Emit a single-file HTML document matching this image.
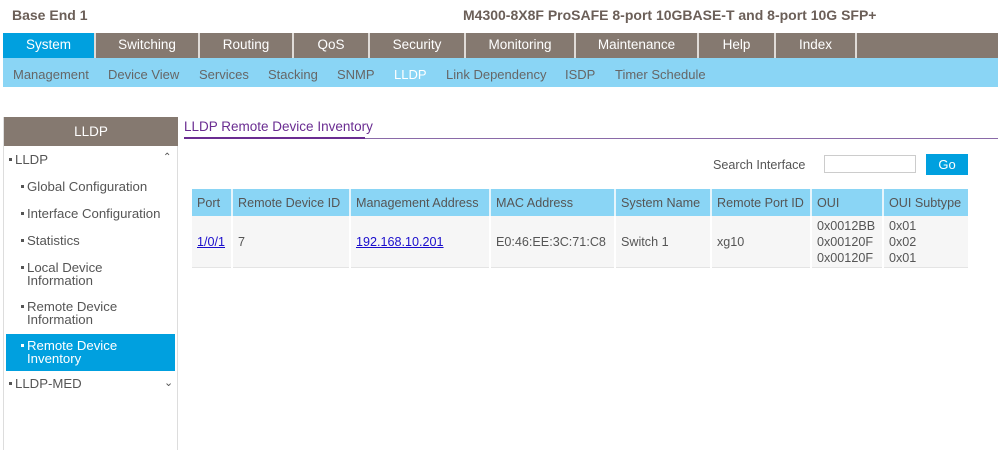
<!DOCTYPE html>
<html><head><style>
body{margin:0;width:998px;height:450px;background:#fff;font-family:"Liberation Sans",Arial,sans-serif;font-size:13px;color:#555;position:relative;overflow:hidden}
.a{position:absolute;white-space:nowrap}
.tab{position:absolute;top:33px;height:25px;background:#857970;color:#fff;text-align:center;line-height:24px;font-size:13.5px;border-right:2px solid #e0dcd8;box-sizing:border-box}
.sub{position:absolute;top:67px;font-size:13px;color:#666}
.si{position:absolute;left:27px;font-size:13.2px;color:#555;line-height:13px;white-space:nowrap}
.si::before{content:"";position:absolute;left:-6px;top:5px;width:3px;height:3px;background:currentColor}
table{position:absolute;left:192px;top:189px;border-collapse:collapse;font-size:12.6px;table-layout:fixed;width:776px}
th{background:#8ad5f5;font-weight:normal;text-align:left;color:#555;height:27px;padding:0 5px;border-right:2px solid #e6f5fc;white-space:nowrap;overflow:hidden}
td{background:#f6f6f6;height:51px;padding:0 5px;border-right:2px solid #fff;border-bottom:1px solid #e4e4e4;line-height:16px;white-space:nowrap;overflow:hidden}
a{color:#1a0dcc}
</style></head><body>
<div class="a" style="left:12px;top:7px;font-weight:bold;font-size:14px;color:#6b5f58">Base End 1</div>
<div class="a" style="left:463px;top:7px;font-weight:bold;font-size:14px;color:#6b5f58">M4300-8X8F ProSAFE 8-port 10GBASE-T and 8-port 10G SFP+</div>
<div class="tab" style="left:3px;width:93px;background:#00a0df">System</div>
<div class="tab" style="left:96px;width:104px">Switching</div>
<div class="tab" style="left:200px;width:94px">Routing</div>
<div class="tab" style="left:294px;width:76px">QoS</div>
<div class="tab" style="left:370px;width:96px">Security</div>
<div class="tab" style="left:466px;width:110px">Monitoring</div>
<div class="tab" style="left:576px;width:123px">Maintenance</div>
<div class="tab" style="left:699px;width:77px">Help</div>
<div class="tab" style="left:776px;width:81px">Index</div>
<div class="tab" style="left:857px;width:141px;border-right:none"></div>
<div class="a" style="left:3px;top:58px;width:995px;height:29px;background:#8ad5f5"></div>
<div class="sub" style="left:13px">Management</div>
<div class="sub" style="left:108px">Device View</div>
<div class="sub" style="left:199px">Services</div>
<div class="sub" style="left:268px">Stacking</div>
<div class="sub" style="left:337px">SNMP</div>
<div class="sub" style="left:394px;color:#fff">LLDP</div>
<div class="sub" style="left:446px">Link Dependency</div>
<div class="sub" style="left:565px">ISDP</div>
<div class="sub" style="left:615px">Timer Schedule</div>

<div class="a" style="left:3px;top:117px;width:175px;height:333px;border-left:1px solid #ddd;border-right:1px solid #ddd;box-sizing:border-box"></div>
<div class="a" style="left:4px;top:117px;width:174px;height:29px;background:#857970;color:#fff;text-align:center;line-height:30px;font-size:13.5px">LLDP</div>
<div class="si" style="left:15px;top:153px">LLDP</div>
<div class="a" style="left:163px;top:152px;font-size:10px">⌃</div>
<div class="si" style="top:180px">Global Configuration</div>
<div class="si" style="top:207px">Interface Configuration</div>
<div class="si" style="top:234px">Statistics</div>
<div class="si" style="top:261px">Local Device<br>Information</div>
<div class="si" style="top:300px">Remote Device<br>Information</div>
<div class="a" style="left:6px;top:334px;width:169px;height:37px;background:#00a0df"></div>
<div class="si" style="top:339px;color:#fff">Remote Device<br>Inventory</div>
<div class="si" style="left:15px;top:377px">LLDP-MED</div>
<div class="a" style="left:164px;top:376px;font-size:11px">⌄</div>

<div class="a" style="left:184px;top:119px;font-size:13.5px;color:#6a2c91">LLDP Remote Device Inventory</div>
<div class="a" style="left:184px;top:138px;width:814px;height:1px;background:#8a6aa8"></div>
<div class="a" style="left:184px;top:137px;width:181px;height:2px;background:#6a2c91"></div>

<div class="a" style="left:713px;top:158px;font-size:12.6px">Search Interface</div>
<div class="a" style="left:824px;top:155px;width:92px;height:18px;border:1px solid #ccc;box-sizing:border-box"></div>
<div class="a" style="left:926px;top:154px;width:42px;height:21px;background:#00a0df;color:#fff;text-align:center;line-height:21px">Go</div>

<table>
<colgroup><col style="width:40px"><col style="width:118px"><col style="width:140px"><col style="width:125px"><col style="width:96px"><col style="width:100px"><col style="width:72px"><col style="width:85px"></colgroup>
<tr><th>Port</th><th>Remote Device ID</th><th>Management Address</th><th>MAC Address</th><th>System Name</th><th>Remote Port ID</th><th>OUI</th><th style="border-right:none">OUI Subtype</th></tr>
<tr><td><a href="#">1/0/1</a></td><td>7</td><td><a href="#">192.168.10.201</a></td><td>E0:46:EE:3C:71:C8</td><td>Switch 1</td><td>xg10</td><td>0x0012BB<br>0x00120F<br>0x00120F</td><td style="border-right:none">0x01<br>0x02<br>0x01</td></tr>
</table>
</body></html>
